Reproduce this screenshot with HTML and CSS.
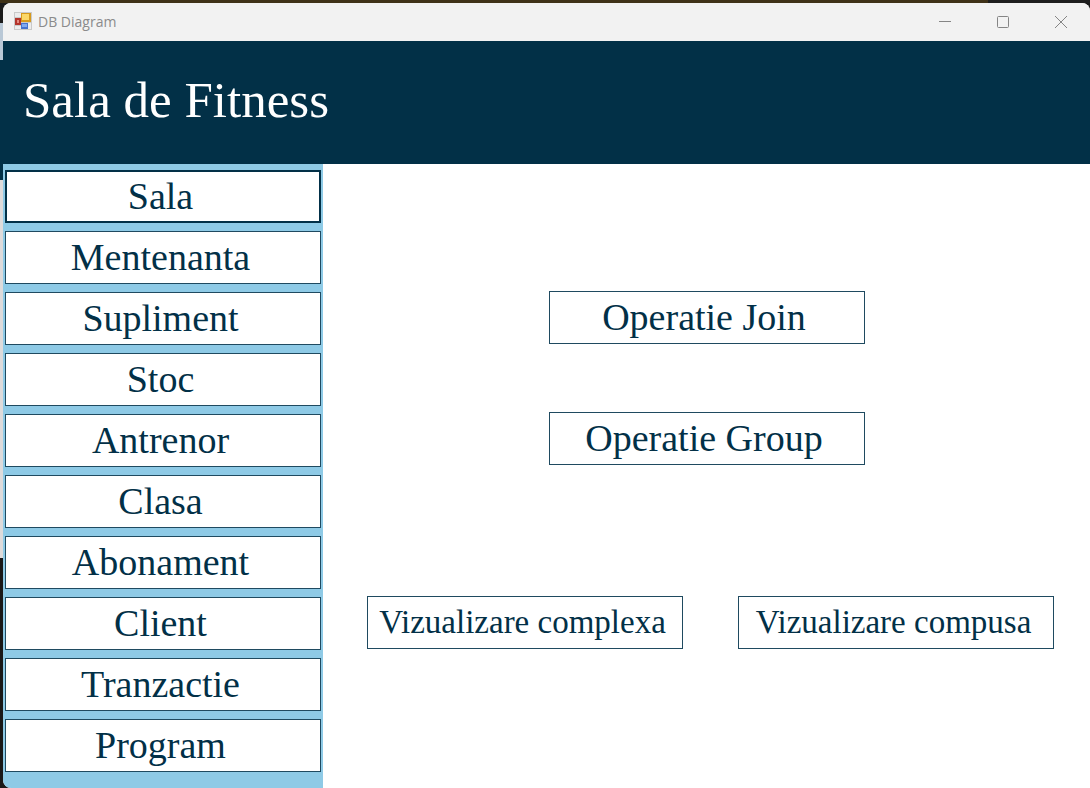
FILE: index.html
```html
<!DOCTYPE html>
<html lang="ro">
<head>
<meta charset="utf-8">
<title>DB Diagram</title>
<link rel="stylesheet" href="styles.css">
</head>
<body>
<div class="window">
  <div class="titlebar">
    <svg class="app-icon" width="18" height="18" viewBox="0 0 18 18" aria-hidden="true">
      <rect width="18" height="18" fill="#c9c9c9"/>
      <path d="M1 1h6v4H1zM1 14h6v3H1zM14 11h3v6h-3z" fill="#ececec"/>
      <rect x="1" y="6" width="6" height="7" fill="#b3342b"/>
      <rect x="3" y="8" width="2" height="3" fill="#e58a80"/>
      <rect x="7" y="1" width="10" height="9" fill="#d79a1c"/>
      <rect x="8" y="2" width="7" height="6" fill="#fbd768"/>
      <rect x="7" y="11" width="7" height="6" fill="#4472cf"/>
      <rect x="8" y="12" width="5" height="3" fill="#7fa8f0"/>
    </svg>
    <span class="caption">DB Diagram</span>
    <div class="controls">
      <button class="control" type="button" aria-label="Minimize"><svg width="14" height="14" viewBox="0 0 14 14"><path d="M1 6.5h12"/></svg></button>
      <button class="control" type="button" aria-label="Maximize"><svg width="14" height="14" viewBox="0 0 14 14"><rect x="1.5" y="1.5" width="11" height="11" rx="1"/></svg></button>
      <button class="control" type="button" aria-label="Close"><svg width="14" height="14" viewBox="0 0 14 14"><path d="M1 1l12 12M13 1L1 13"/></svg></button>
    </div>
  </div>
  <header class="banner"><h1 class="heading">Sala de Fitness</h1></header>
  <div class="content">
    <nav class="sidebar">
      <button class="btn btn-active" type="button">Sala</button>
      <button class="btn" type="button">Mentenanta</button>
      <button class="btn" type="button">Supliment</button>
      <button class="btn" type="button">Stoc</button>
      <button class="btn" type="button">Antrenor</button>
      <button class="btn" type="button">Clasa</button>
      <button class="btn" type="button">Abonament</button>
      <button class="btn" type="button">Client</button>
      <button class="btn" type="button">Tranzactie</button>
      <button class="btn" type="button">Program</button>
    </nav>
    <main class="main">
      <div class="operations">
        <button class="btn" type="button">Operatie Join</button>
        <button class="btn" type="button">Operatie Group</button>
      </div>
      <div class="views">
        <button class="btn btn-small" type="button">Vizualizare complexa</button>
        <button class="btn btn-small" type="button">Vizualizare compusa</button>
      </div>
    </main>
  </div>
</div>
</body>
</html>
```

FILE: styles.css
```css
* {
  box-sizing: border-box;
}

body {
  margin: 0;
  min-height: 100vh;
  display: flex;
  padding: 3px 0 0 3px;
  background:
    linear-gradient(90deg, #3f3218 0 988px, #1e1e1e 988px) 0 0 / 100% 3px no-repeat,
    linear-gradient(#1b1b1b 0 23px, #b9c8d6 23px 60px, #023047 60px 180px, #dedbdb 180px 558px, #1a1818 558px);
}

.window {
  flex: 1;
  display: flex;
  flex-direction: column;
  overflow: hidden;
  border-radius: 8px 8px 0 8px;
  background: #fff;
  color: #023047;
  font-family: "Palatino Linotype", Palatino, "Liberation Serif", serif;
}

.titlebar {
  display: flex;
  align-items: center;
  height: 38px;
  padding: 0 0 2px 11px;
  background: #f2f2f2;
}

.caption {
  margin-left: 6px;
  color: #8b8b8b;
  font: 14px "Segoe UI", "Open Sans", sans-serif;
}

.controls {
  display: flex;
  margin-left: auto;
}

.control {
  display: flex;
  align-items: center;
  justify-content: center;
  width: 58px;
  height: 36px;
  padding: 2px 0 0;
  border: 0;
  background: none;
}

.control svg {
  fill: none;
  stroke: #858585;
}

.banner {
  display: flex;
  align-items: center;
  height: 123px;
  padding: 0 20px 6px;
  background: #023047;
}

.heading {
  margin: 0;
  color: #fff;
  font-size: 51px;
  font-weight: 400;
}

.content {
  flex: 1;
  display: flex;
}

.sidebar {
  display: flex;
  flex-direction: column;
  gap: 8px;
  width: 320px;
  padding: 6px 2px 16px;
  background: #8ecae6;
}

.btn {
  width: 316px;
  height: 53px;
  padding: 0 5px 2px 0;
  border: 1px solid #1f4a60;
  border-radius: 0;
  background: #fff;
  color: #023047;
  font-family: inherit;
  font-size: 38px;
  line-height: 44px;
}

.btn-active {
  border: 2px solid #023047;
}

.btn-small {
  font-size: 33px;
}

.main {
  flex: 1;
  display: flex;
  flex-direction: column;
  gap: 131px;
  padding-top: 127px;
}

.operations {
  display: flex;
  flex-direction: column;
  align-items: center;
  gap: 68px;
}

.views {
  display: flex;
  justify-content: space-between;
  padding: 0 36px 0 44px;
}
```
